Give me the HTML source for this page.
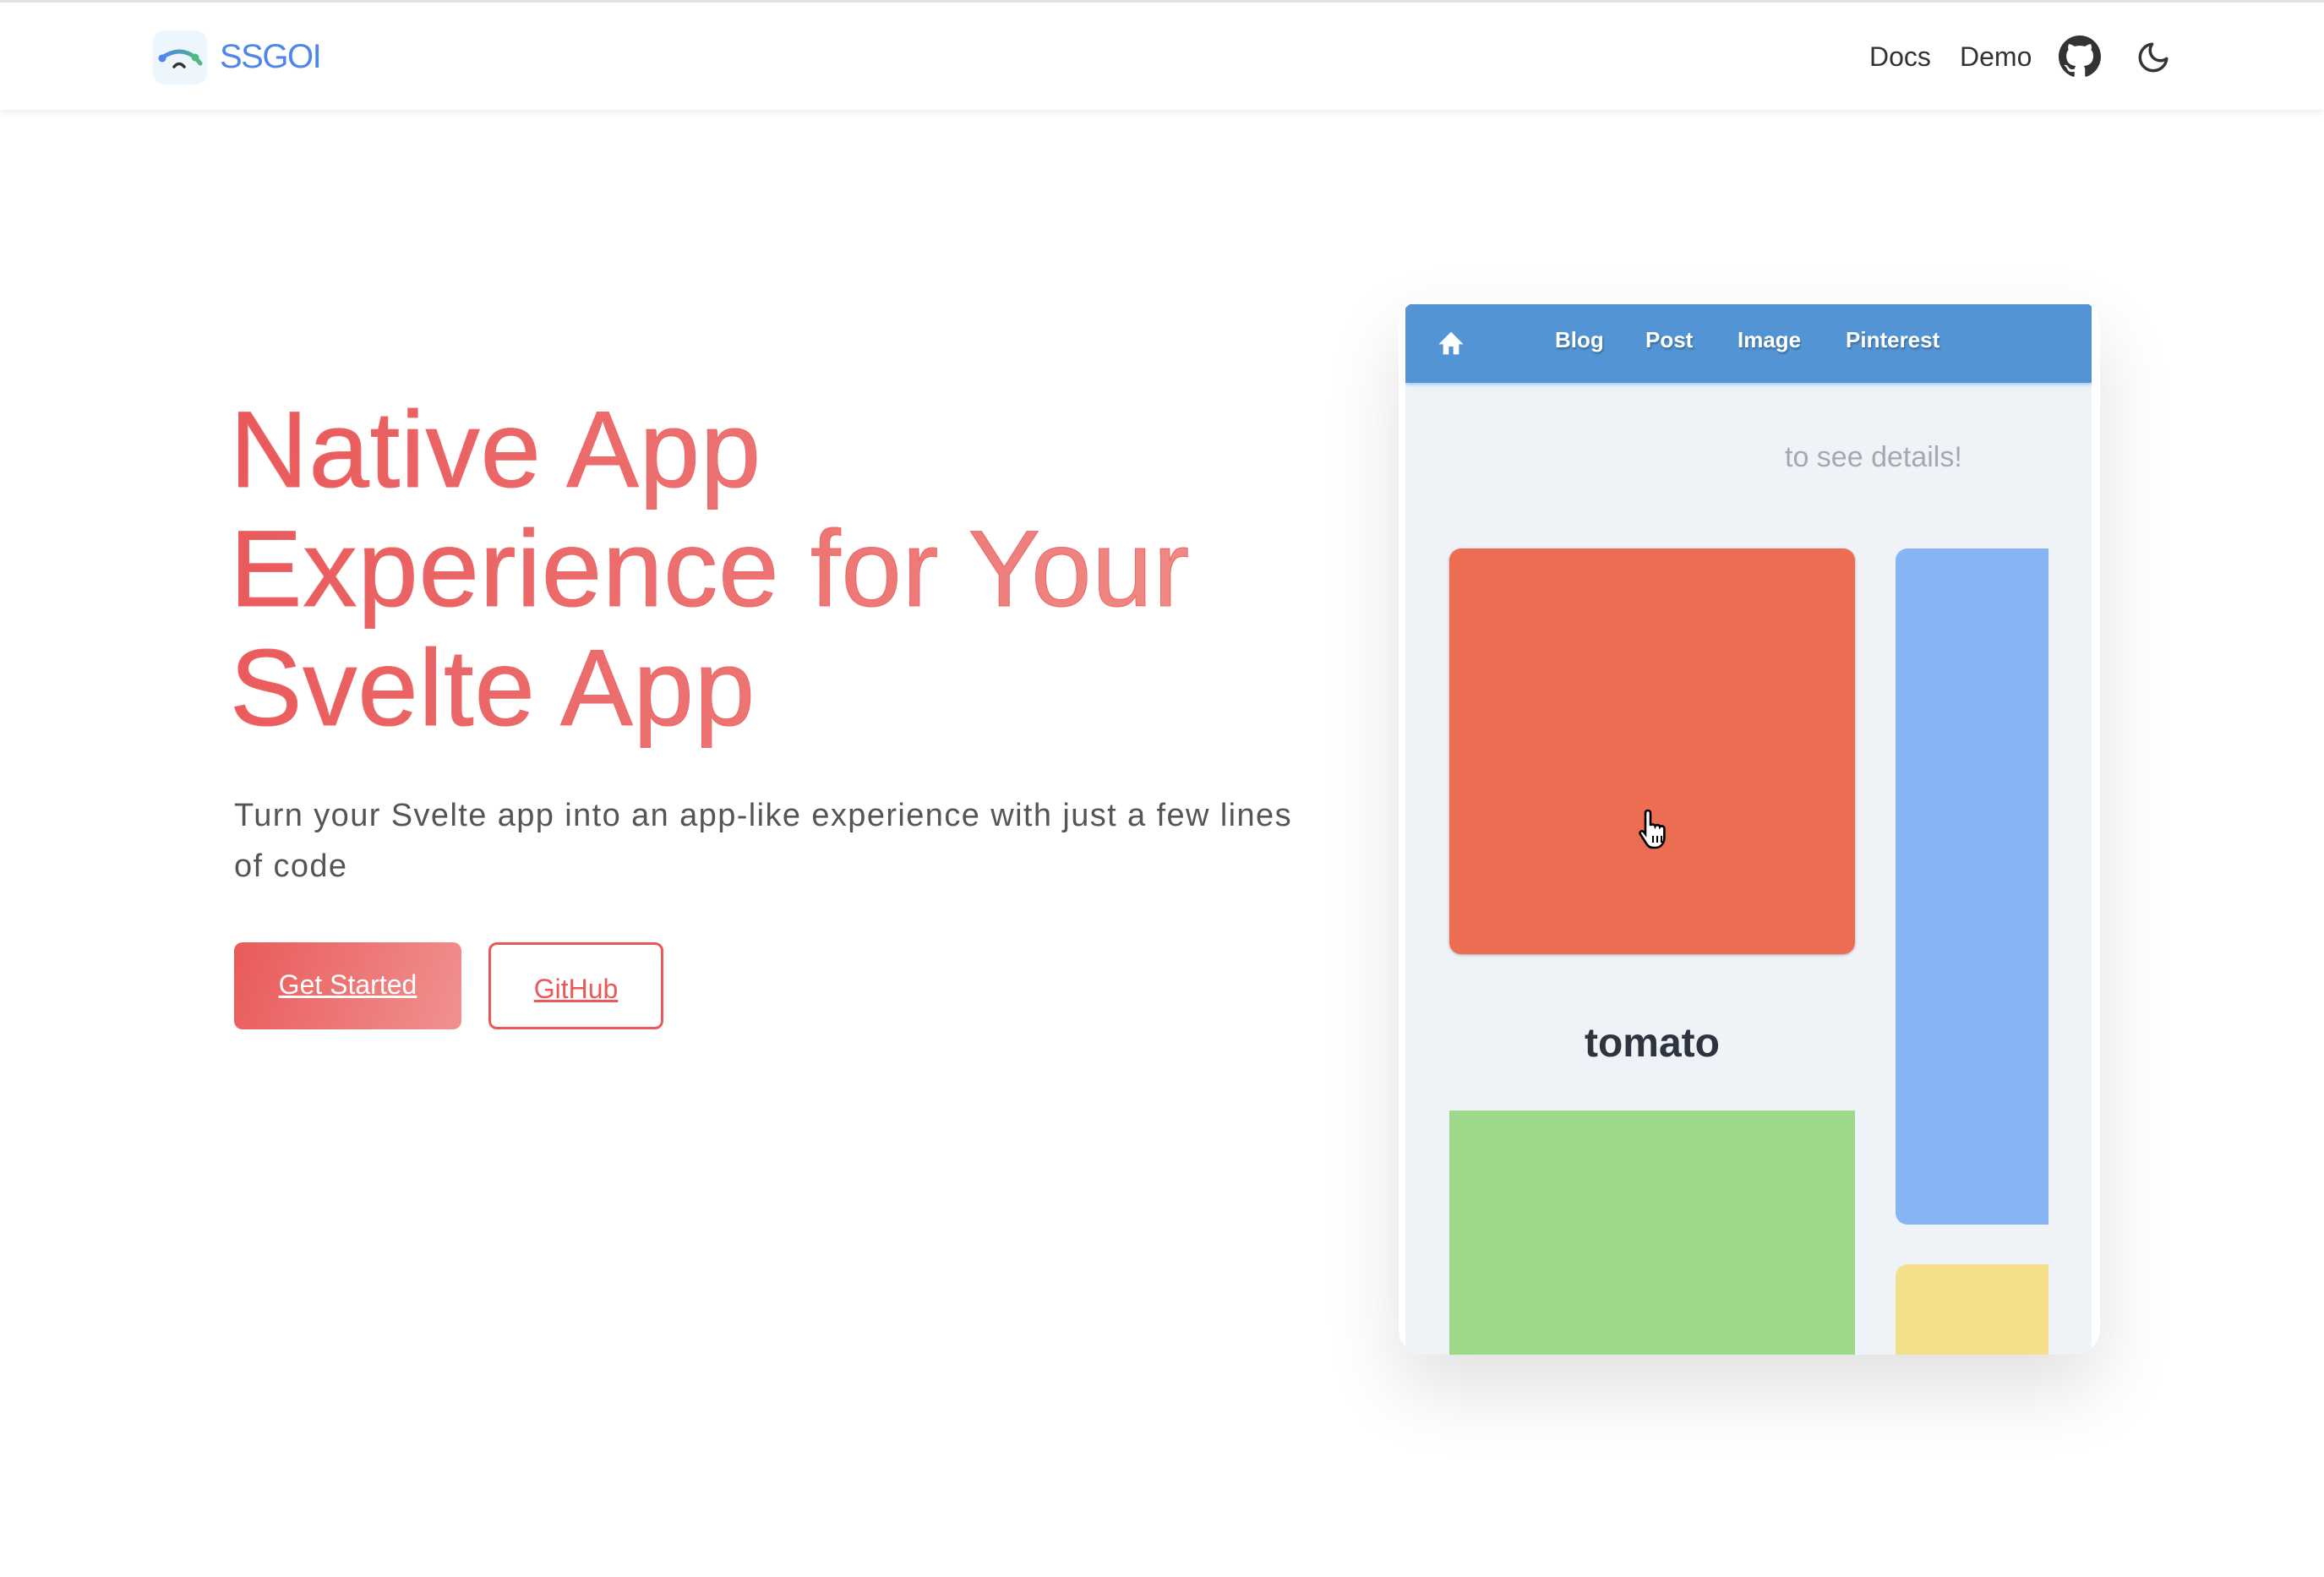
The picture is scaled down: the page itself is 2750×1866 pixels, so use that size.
<!DOCTYPE html>
<html><head><meta charset="utf-8"><style>
*{margin:0;padding:0;box-sizing:border-box}
html,body{width:2750px;height:1866px;overflow:hidden;background:#fff;font-family:"Liberation Sans",sans-serif}
.top{position:absolute;left:0;top:0;width:2750px;height:3px;background:#e2e2e8}
.nav{position:absolute;left:0;top:3px;width:2750px;height:127px;background:#fff;box-shadow:0 3px 8px rgba(0,0,0,0.07)}
.logo{position:absolute;left:181px;top:33px;width:64px;height:64px;border-radius:14px;background:#eef6fd}
.brand{position:absolute;left:260px;top:42px;font-size:40px;color:#4f86ea;letter-spacing:-1.5px}
.nl{position:absolute;top:46px;font-size:32px;color:#333}
h1{position:absolute;left:272px;top:462px;font-weight:400;font-size:128px;line-height:141px;letter-spacing:1px;-webkit-text-stroke:1px #ec6a68;background:linear-gradient(100deg,#e9585a,#f08a86);-webkit-background-clip:text;color:transparent}
.p{position:absolute;left:277px;top:935px;width:1275px;font-size:38px;line-height:60px;color:#555;letter-spacing:1.4px}
.b1{position:absolute;left:277px;top:1115px;width:269px;height:103px;border-radius:10px;background:linear-gradient(110deg,#e95a5a,#f09290);color:#fff;font-size:32px;text-align:center;line-height:100px;text-decoration:underline}
.b2{position:absolute;left:578px;top:1115px;width:207px;height:103px;border-radius:10px;border:3px solid #ea5858;color:#ea5858;font-size:32px;text-align:center;line-height:104px;text-decoration:underline}
.frame{position:absolute;left:1655px;top:355px;width:830px;height:1248px;border-radius:30px;background:#fff;box-shadow:0 40px 90px rgba(0,0,0,0.12);overflow:hidden}
.scr{position:absolute;left:8px;top:5px;width:812px;height:1243px;background:#eff3f8;overflow:hidden}
.hd{position:absolute;left:0;top:0;width:812px;height:93px;background:#5294d4;box-shadow:0 2px 4px rgba(100,170,240,.6)}
.hd span{position:absolute;top:27px;color:#fff;font-weight:bold;font-size:26px;text-shadow:1px 2px 2px rgba(0,0,0,.3)}
.c{position:absolute}
</style></head><body>
<div class="top"></div>
<div class="nav">
 <div class="logo"><svg width="64" height="64" viewBox="0 0 64 64"><defs><linearGradient id="g" x1="0" x2="1"><stop offset="0" stop-color="#4f86ea"/><stop offset="1" stop-color="#4fb97f"/></linearGradient></defs><path d="M11 32 Q32 18 50 32 L56 39" stroke="url(#g)" stroke-width="5" fill="none" stroke-linecap="round"/><circle cx="11" cy="33" r="4.5" fill="#4f86ea"/><circle cx="50" cy="32" r="4.5" fill="#4fb97f"/><path d="M25 43 Q31 36 37 43" stroke="#333" stroke-width="3.5" fill="none" stroke-linecap="round"/></svg></div>
 <div class="brand">SSGOI</div>
 <div class="nl" style="left:2212px">Docs</div>
 <div class="nl" style="left:2319px">Demo</div>
 <svg style="position:absolute;left:2436px;top:39px" width="50" height="50" viewBox="0 0 16 16"><path fill="#333" d="M8 0C3.580 0 0 3.58 0 8c0 3.54 2.290 6.53 5.47 7.59.4.07.55-.17.55-.38 0-.19-.01-.82-.01-1.49-2.01.37-2.53-.49-2.69-.94-.09-.23-.48-.94-.82-1.13-.28-.15-.68-.52-.01-.53.63-.01 1.08.58 1.23.82.72 1.21 1.87.87 2.33.66.07-.52.28-.87.51-1.07-1.78-.2-3.64-.89-3.640-3.95 0-.87.31-1.59.82-2.15-.08-.2-.36-1.02.08-2.12 0 0 .67-.21 2.2.82.64-.18 1.32-.27 2-.27.68 0 1.36.09 2 .27 1.53-1.04 2.2-.82 2.2-.82.44 1.1.16 1.92.08 2.12.51.56.82 1.27.82 2.15 0 3.07-1.87 3.75-3.65 3.95.29.25.54.73.54 1.48 0 1.07-.01 1.93-.01 2.2 0 .21.15.46.55.38A8.013 8.013 0 0016 8c0-4.42-3.58-8-8-8z"/></svg>
 <svg style="position:absolute;left:2527px;top:44px" width="42" height="42" viewBox="0 0 24 24"><path d="M21 12.79A9 9 0 1 1 11.21 3 7 7 0 0 0 21 12.79z" fill="none" stroke="#333" stroke-width="2" stroke-linecap="round" stroke-linejoin="round"/></svg>
</div>
<h1>Native App<br>Experience for Your<br>Svelte App</h1>
<div class="p">Turn your Svelte app into an app-like experience with just a few lines of code</div>
<div class="b1">Get Started</div>
<div class="b2">GitHub</div>
<div class="frame"><div class="scr">
 <div class="hd">
  <svg style="position:absolute;left:38px;top:30px" width="32" height="32" viewBox="0 0 24 24"><path d="M12 2 L23 13 H19 V22 H14 V15 H10 V22 H5 V13 H1 Z" fill="#fff"/></svg>
  <span style="left:177px">Blog</span><span style="left:284px">Post</span><span style="left:393px">Image</span><span style="left:521px">Pinterest</span>
 </div>
 <div class="c" style="left:449px;top:162px;font-size:34px;color:#a4a9b0">to see details!</div>
 <div class="c" style="left:52px;top:289px;width:480px;height:480px;border-radius:14px;background:#ec6d51;box-shadow:0 1px 3px rgba(0,0,0,.3)"></div>
 <svg class="c" style="left:273px;top:595px" width="48" height="52" viewBox="0 0 24 26"><path d="M7 2c1 0 1.5.7 1.5 1.5V11c.3-1 2.5-1 2.8.3.5-1 2.5-1 2.8.4.6-.8 2.6-.6 2.6 1V18c0 3-2 6-5 6H10c-2 0-3-1-4-2.5L2.5 16c-.7-1.2.6-2.4 1.8-1.5L5.5 16V3.5C5.5 2.7 6 2 7 2z" fill="#fff" stroke="#000" stroke-width="1.3"/><path d="M10 17v4M12.5 17v4M15 17v4" stroke="#000" stroke-width="1"/></svg>
 <div class="c" style="left:52px;top:847px;width:480px;text-align:center;font-size:48px;font-weight:bold;color:#2d3440">tomato</div>
 <div class="c" style="left:52px;top:954px;width:480px;height:300px;background:#9dd98b"></div>
 <div class="c" style="left:580px;top:289px;width:181px;height:800px;border-radius:14px 0 0 14px;background:#86b4f5"></div>
 <div class="c" style="left:580px;top:1136px;width:181px;height:120px;border-radius:14px 0 0 0;background:#f5e08a"></div>
</div></div>
</body></html>
